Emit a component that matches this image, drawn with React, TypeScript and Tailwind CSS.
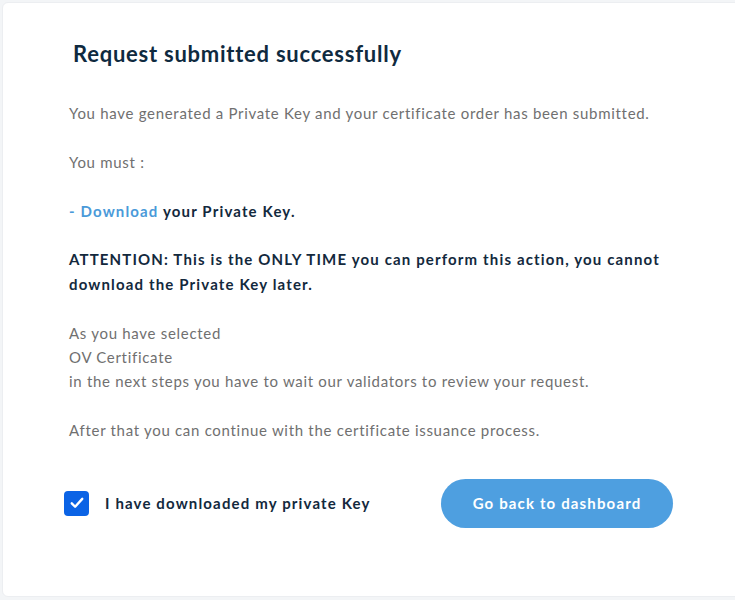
import React, { useState } from "react";

export default function App() {
  const [checked, setChecked] = useState(true);

  return (
    <div className="min-h-[600px] w-[735px] bg-[#f3f5f7] pt-[2px] pl-[2px] font-['Lato','Noto_Sans',sans-serif] overflow-hidden">
      <div className="h-[595px] w-[760px] bg-white rounded-md border border-[#eceef1] pt-[36px] pl-[66px]">
        <h2 className="ml-[4px] text-[22px] leading-[30px] font-bold tracking-[0.75px] text-[#0f2a3f]">
          Request submitted successfully
        </h2>

        <div className="mt-[32px] w-[610px] text-[15px] leading-[24.4px] tracking-[0.7px] text-[#707070]">
          <p className="mb-[24.4px]">
            You have generated a Private Key and your certificate order has been submitted.
          </p>
          <p className="mb-[24.4px]">You must :</p>
          <p className="mb-[24.4px] font-bold tracking-[1.15px] text-[#13293d]">
            <span className="text-[#4a9ad9]">- Download</span> your Private Key.
          </p>
          <p className="mb-[24.4px] font-bold tracking-[1.15px] text-[#13293d]">
            ATTENTION: This is the ONLY TIME you can perform this action, you cannot download the Private Key later.
          </p>
          <p className="mb-[24.4px]">
            As you have selected
            <br />
            OV Certificate
            <br />
            in the next steps you have to wait our validators to review your request.
          </p>
          <p>After that you can continue with the certificate issuance process.</p>
        </div>

        <div className="mt-[36px] -ml-[5px] flex items-center">
          <label className="flex w-[377px] items-center gap-4 cursor-pointer">
            <button
              type="button"
              onClick={() => setChecked(!checked)}
              className={`flex h-[25px] w-[25px] items-center justify-center rounded-[4px] ${
                checked ? "bg-[#0b63e5]" : "bg-white border-2 border-[#9aa3ad]"
              }`}
            >
              {checked && (
                <svg viewBox="0 0 24 24" className="h-[18px] w-[18px]" fill="none" stroke="white" strokeWidth="3.2" strokeLinecap="round" strokeLinejoin="round">
                  <path d="M5 12.5l4.5 4.5L19 6.5" />
                </svg>
              )}
            </button>
            <span className="text-[15px] font-bold tracking-[1.15px] text-[#13293d]">I have downloaded my private Key</span>
          </label>
          <button
            type="button"
            className="h-[49px] w-[232px] rounded-full bg-[#4e9fe0] text-[15px] font-bold tracking-[1.15px] text-white"
          >
            Go back to dashboard
          </button>
        </div>
      </div>
    </div>
  );
}
